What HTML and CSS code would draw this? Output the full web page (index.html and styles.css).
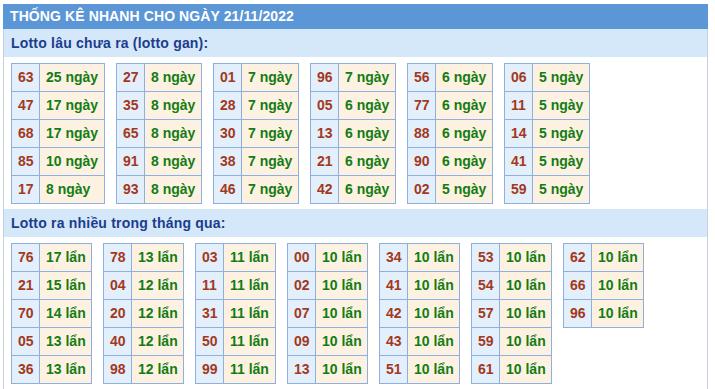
FILE: index.html
```html
<!DOCTYPE html>
<html lang="vi">
<head>
<meta charset="utf-8">
<title>Thống kê nhanh</title>
<link rel="stylesheet" href="styles.css">
</head>
<body>
<div class="box">
  <div class="head">THỐNG KÊ NHANH CHO NGÀY 21/11/2022</div>
  <div class="sub">Lotto lâu chưa ra (lotto gan):</div>
  <div class="tables gan">
    <table class="wide"><tr><td class="n">63</td><td class="v">25 ngày</td></tr><tr><td class="n">47</td><td class="v">17 ngày</td></tr><tr><td class="n">68</td><td class="v">17 ngày</td></tr><tr><td class="n">85</td><td class="v">10 ngày</td></tr><tr><td class="n">17</td><td class="v">8 ngày</td></tr></table>
    <table><tr><td class="n">27</td><td class="v">8 ngày</td></tr><tr><td class="n">35</td><td class="v">8 ngày</td></tr><tr><td class="n">65</td><td class="v">8 ngày</td></tr><tr><td class="n">91</td><td class="v">8 ngày</td></tr><tr><td class="n">93</td><td class="v">8 ngày</td></tr></table>
    <table><tr><td class="n">01</td><td class="v">7 ngày</td></tr><tr><td class="n">28</td><td class="v">7 ngày</td></tr><tr><td class="n">30</td><td class="v">7 ngày</td></tr><tr><td class="n">38</td><td class="v">7 ngày</td></tr><tr><td class="n">46</td><td class="v">7 ngày</td></tr></table>
    <table><tr><td class="n">96</td><td class="v">7 ngày</td></tr><tr><td class="n">05</td><td class="v">6 ngày</td></tr><tr><td class="n">13</td><td class="v">6 ngày</td></tr><tr><td class="n">21</td><td class="v">6 ngày</td></tr><tr><td class="n">42</td><td class="v">6 ngày</td></tr></table>
    <table><tr><td class="n">56</td><td class="v">6 ngày</td></tr><tr><td class="n">77</td><td class="v">6 ngày</td></tr><tr><td class="n">88</td><td class="v">6 ngày</td></tr><tr><td class="n">90</td><td class="v">6 ngày</td></tr><tr><td class="n">02</td><td class="v">5 ngày</td></tr></table>
    <table><tr><td class="n">06</td><td class="v">5 ngày</td></tr><tr><td class="n">11</td><td class="v">5 ngày</td></tr><tr><td class="n">14</td><td class="v">5 ngày</td></tr><tr><td class="n">41</td><td class="v">5 ngày</td></tr><tr><td class="n">59</td><td class="v">5 ngày</td></tr></table>
  </div>
  <div class="sub sub2">Lotto ra nhiều trong tháng qua:</div>
  <div class="tables lan">
    <table><tr><td class="n">76</td><td class="v">17 lẩn</td></tr><tr><td class="n">21</td><td class="v">15 lẩn</td></tr><tr><td class="n">70</td><td class="v">14 lẩn</td></tr><tr><td class="n">05</td><td class="v">13 lẩn</td></tr><tr><td class="n">36</td><td class="v">13 lẩn</td></tr></table>
    <table><tr><td class="n">78</td><td class="v">13 lẩn</td></tr><tr><td class="n">04</td><td class="v">12 lẩn</td></tr><tr><td class="n">20</td><td class="v">12 lẩn</td></tr><tr><td class="n">40</td><td class="v">12 lẩn</td></tr><tr><td class="n">98</td><td class="v">12 lẩn</td></tr></table>
    <table><tr><td class="n">03</td><td class="v">11 lẩn</td></tr><tr><td class="n">11</td><td class="v">11 lẩn</td></tr><tr><td class="n">31</td><td class="v">11 lẩn</td></tr><tr><td class="n">50</td><td class="v">11 lẩn</td></tr><tr><td class="n">99</td><td class="v">11 lẩn</td></tr></table>
    <table><tr><td class="n">00</td><td class="v">10 lẩn</td></tr><tr><td class="n">02</td><td class="v">10 lẩn</td></tr><tr><td class="n">07</td><td class="v">10 lẩn</td></tr><tr><td class="n">09</td><td class="v">10 lẩn</td></tr><tr><td class="n">13</td><td class="v">10 lẩn</td></tr></table>
    <table><tr><td class="n">34</td><td class="v">10 lẩn</td></tr><tr><td class="n">41</td><td class="v">10 lẩn</td></tr><tr><td class="n">42</td><td class="v">10 lẩn</td></tr><tr><td class="n">43</td><td class="v">10 lẩn</td></tr><tr><td class="n">51</td><td class="v">10 lẩn</td></tr></table>
    <table><tr><td class="n">53</td><td class="v">10 lẩn</td></tr><tr><td class="n">54</td><td class="v">10 lẩn</td></tr><tr><td class="n">57</td><td class="v">10 lẩn</td></tr><tr><td class="n">59</td><td class="v">10 lẩn</td></tr><tr><td class="n">61</td><td class="v">10 lẩn</td></tr></table>
    <table><tr><td class="n">62</td><td class="v">10 lẩn</td></tr><tr><td class="n">66</td><td class="v">10 lẩn</td></tr><tr><td class="n">96</td><td class="v">10 lẩn</td></tr></table>
  </div>
</div>
</body>
</html>
```

FILE: styles.css
```css
html, body {
  margin: 0;
  padding: 0;
  background: #ffffff;
}

body {
  font-family: "Liberation Sans", Arial, sans-serif;
  font-size: 14px;
  font-weight: bold;
}

.box {
  margin: 4px 0 0 3px;
  width: 703px;
  height: 385px;
  border-left: 1px solid #c6d0e0;
  border-right: 1px solid #c6d0e0;
}

.head {
  margin: 0 -1px;
  height: 25px;
  line-height: 25px;
  padding-left: 7px;
  background: #5b96d6;
  color: #ffffff;
  letter-spacing: 0.1px;
}

.sub {
  height: 28px;
  line-height: 28px;
  padding-left: 7px;
  background: #d5e8fa;
  color: #1b3d8c;
  letter-spacing: 0.2px;
}

.sub2 {
  margin-top: 5px;
}

.tables {
  display: flex;
  align-items: flex-start;
  gap: 11px;
  padding: 6px 0 0 7px;
}

table {
  border-collapse: collapse;
}

td {
  border: 1px solid #8eb0e0;
  height: 27px;
  padding: 0;
  line-height: 27px;
  white-space: nowrap;
}

.n {
  width: 16px;
  background: #e4effc;
  color: #a2391c;
  padding: 0 5px 0 6px;
}

.v {
  background: #fdf2e2;
  color: #147c14;
  padding: 0 5px 0 6px;
}

.gan .v {
  width: 45px;
}

.gan .wide .v {
  width: 53px;
}

.lan .v {
  width: 40px;
}
```
